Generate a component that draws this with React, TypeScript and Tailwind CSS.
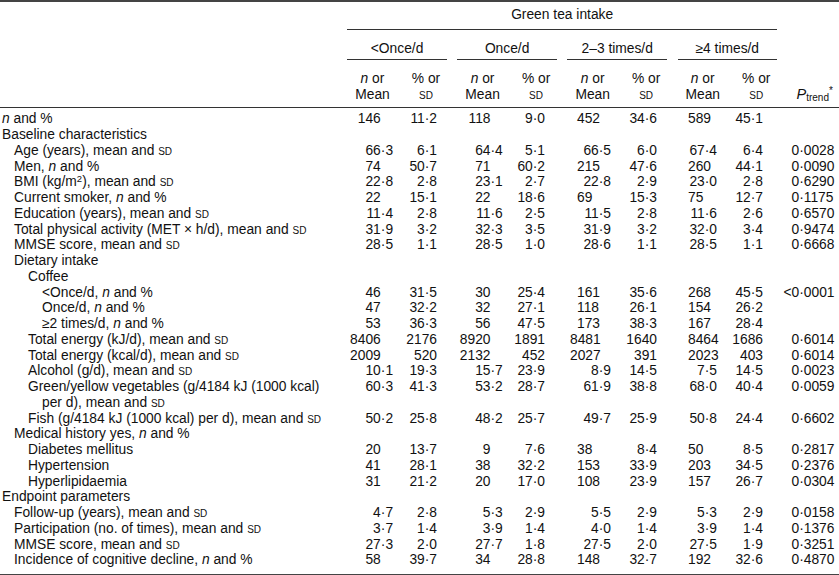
import React from "react";

type Row = { label: React.ReactNode; level: number; v?: string[]; p?: string };

const I = ({ children }: { children: React.ReactNode }) => <i>{children}</i>;
const SD = () => <span className="[font-variant-caps:small-caps]">sd</span>;

const rows: Row[] = [
  { label: <><I>n</I> and %</>, level: 0, v: ["146", "11·2", "118", "9·0", "452", "34·6", "589", "45·1"], p: "" },
  { label: "Baseline characteristics", level: 0 },
  { label: <>Age (years), mean and <SD /></>, level: 1, v: ["66·3", "6·1", "64·4", "5·1", "66·5", "6·0", "67·4", "6·4"], p: "0·0028" },
  { label: <>Men, <I>n</I> and %</>, level: 1, v: ["74", "50·7", "71", "60·2", "215", "47·6", "260", "44·1"], p: "0·0090" },
  { label: <>BMI (kg/m<sup className="text-[9.5px]">2</sup>), mean and <SD /></>, level: 1, v: ["22·8", "2·8", "23·1", "2·7", "22·8", "2·9", "23·0", "2·8"], p: "0·6290" },
  { label: <>Current smoker, <I>n</I> and %</>, level: 1, v: ["22", "15·1", "22", "18·6", "69", "15·3", "75", "12·7"], p: "0·1175" },
  { label: <>Education (years), mean and <SD /></>, level: 1, v: ["11·4", "2·8", "11·6", "2·5", "11·5", "2·8", "11·6", "2·6"], p: "0·6570" },
  { label: <>Total physical activity (MET × h/d), mean and <SD /></>, level: 1, v: ["31·9", "3·2", "32·3", "3·5", "31·9", "3·2", "32·0", "3·4"], p: "0·9474" },
  { label: <>MMSE score, mean and <SD /></>, level: 1, v: ["28·5", "1·1", "28·5", "1·0", "28·6", "1·1", "28·5", "1·1"], p: "0·6668" },
  { label: "Dietary intake", level: 1 },
  { label: "Coffee", level: 2 },
  { label: <>&lt;Once/d, <I>n</I> and %</>, level: 3, v: ["46", "31·5", "30", "25·4", "161", "35·6", "268", "45·5"], p: "<0·0001" },
  { label: <>Once/d, <I>n</I> and %</>, level: 3, v: ["47", "32·2", "32", "27·1", "118", "26·1", "154", "26·2"], p: "" },
  { label: <>≥2 times/d, <I>n</I> and %</>, level: 3, v: ["53", "36·3", "56", "47·5", "173", "38·3", "167", "28·4"], p: "" },
  { label: <>Total energy (kJ/d), mean and <SD /></>, level: 2, v: ["8406", "2176", "8920", "1891", "8481", "1640", "8464", "1686"], p: "0·6014" },
  { label: <>Total energy (kcal/d), mean and <SD /></>, level: 2, v: ["2009", "520", "2132", "452", "2027", "391", "2023", "403"], p: "0·6014" },
  { label: <>Alcohol (g/d), mean and <SD /></>, level: 2, v: ["10·1", "19·3", "15·7", "23·9", "8·9", "14·5", "7·5", "14·5"], p: "0·0023" },
  { label: "Green/yellow vegetables (g/4184 kJ (1000 kcal)", level: 2, v: ["60·3", "41·3", "53·2", "28·7", "61·9", "38·8", "68·0", "40·4"], p: "0·0059" },
  { label: <>per d), mean and <SD /></>, level: 3 },
  { label: <>Fish (g/4184 kJ (1000 kcal) per d), mean and <SD /></>, level: 2, v: ["50·2", "25·8", "48·2", "25·7", "49·7", "25·9", "50·8", "24·4"], p: "0·6602" },
  { label: <>Medical history yes, <I>n</I> and %</>, level: 1 },
  { label: "Diabetes mellitus", level: 2, v: ["20", "13·7", "9", "7·6", "38", "8·4", "50", "8·5"], p: "0·2817" },
  { label: "Hypertension", level: 2, v: ["41", "28·1", "38", "32·2", "153", "33·9", "203", "34·5"], p: "0·2376" },
  { label: "Hyperlipidaemia", level: 2, v: ["31", "21·2", "20", "17·0", "108", "23·9", "157", "26·7"], p: "0·0304" },
  { label: "Endpoint parameters", level: 0 },
  { label: <>Follow-up (years), mean and <SD /></>, level: 1, v: ["4·7", "2·8", "5·3", "2·9", "5·5", "2·9", "5·3", "2·9"], p: "0·0158" },
  { label: <>Participation (no. of times), mean and <SD /></>, level: 1, v: ["3·7", "1·4", "3·9", "1·4", "4·0", "1·4", "3·9", "1·4"], p: "0·1376" },
  { label: <>MMSE score, mean and <SD /></>, level: 1, v: ["27·3", "2·0", "27·7", "1·8", "27·5", "2·0", "27·5", "1·9"], p: "0·3251" },
  { label: <>Incidence of cognitive decline, <I>n</I> and %</>, level: 1, v: ["58", "39·7", "34", "28·8", "148", "32·7", "192", "32·6"], p: "0·4870" },
];

const split = (s: string) => {
  const i = s.indexOf("·");
  return i < 0 ? [s, ""] : [s.slice(0, i), s.slice(i)];
};

const Col1 = ({ s }: { s: string }) => {
  const [a, b] = split(s);
  return (
    <div className="flex w-[50px]">
      <span className="w-[30.8px] text-right">{a}</span>
      <span className="w-[19.2px] text-left">{b}</span>
    </div>
  );
};

const Col3 = ({ s }: { s: string }) => {
  const [a, b] = split(s);
  return (
    <div className="flex w-[65px]">
      <span className="w-[45.5px] text-right">{a}</span>
      <span className="w-[19.5px] text-left">{b}</span>
    </div>
  );
};

const Col5 = ({ s }: { s: string }) => {
  const dec = s.includes("·");
  if (dec) return <div className="w-[65px] text-right pr-[9px]">{s}</div>;
  if (s.length === 4) return <div className="w-[65px] text-left pl-[15px]">{s}</div>;
  return <div className="w-[65px] text-left pl-[22px]">{s}</div>;
};

const Col7 = ({ s }: { s: string }) => {
  const dec = s.includes("·");
  if (dec) return <div className="w-[65px] text-right pr-[13px]">{s}</div>;
  return <div className="w-[65px] text-left pl-[23px]">{s}</div>;
};

const indent = ["pl-[2px]", "pl-[14px]", "pl-[28px]", "pl-[42px]"];

function DataRow({ r }: { r: Row }) {
  return (
    <div className="flex">
      <div className={`w-[350px] whitespace-nowrap ${indent[r.level]}`}>{r.label}</div>
      {r.v && (
        <>
          <Col1 s={r.v[0]} />
          <div className="w-[45px] text-right pr-[8px]">{r.v[1]}</div>
          <Col3 s={r.v[2]} />
          <div className="w-[45px] text-right pr-[10px]">{r.v[3]}</div>
          <Col5 s={r.v[4]} />
          <div className="w-[45px] text-right pr-[8px]">{r.v[5]}</div>
          <Col7 s={r.v[6]} />
          <div className="w-[45px] text-right pr-[12px]">{r.v[7]}</div>
          <div className="w-[64px] pl-[16.5px] whitespace-nowrap">
            {r.p && r.p.startsWith("<") ? (
              <>
                <span className="ml-[-8px]">&lt;</span>
                {r.p.slice(1)}
              </>
            ) : (
              r.p
            )}
          </div>
        </>
      )}
    </div>
  );
}

function Group({ title }: { title: React.ReactNode }) {
  return (
    <div className="w-[99.5px] flex flex-col">
      <div className="text-center pt-[10.4px] pb-[3px] border-b border-[#333]">{title}</div>
      <div className="flex pt-[10.4px]">
        <div className="w-[50.4px] text-center">
          <I>n</I> or
          <br />
          Mean
        </div>
        <div className="w-[41.6px] ml-[7.5px] text-center">
          % or
          <br />
          <SD />
        </div>
      </div>
    </div>
  );
}

export default function App() {
  return (
    <div className="w-[839px] h-[575px] bg-white text-[#111] text-[13.8px] leading-[15.75px] font-['Liberation_Sans',Arial,sans-serif] overflow-hidden">
      <div className="border-t-2 border-[#444]">
        <div className="flex border-b border-[#333] pb-[4.8px]">
          <div className="w-[347.3px]" />
          <div className="w-[429.7px] flex flex-col">
            <div className="text-center pt-[5.1px] pb-[6.4px] border-b border-[#333]">Green tea intake</div>
            <div className="flex gap-[10.6px]">
              <Group title="<Once/d" />
              <Group title="Once/d" />
              <Group title="2–3 times/d" />
              <Group title="≥4 times/d" />
            </div>
          </div>
          <div className="flex-1 flex items-end pl-[19.5px]">
            <span className="whitespace-nowrap">
              <i className="text-[14.5px]">P</i>
              <sub className="text-[10px]">trend</sub>
              <sup className="text-[10px]">*</sup>
            </span>
          </div>
        </div>
        <div className="pt-[3.3px] pb-[6px] border-b-2 border-[#444]">
          {rows.map((r, i) => (
            <DataRow key={i} r={r} />
          ))}
        </div>
      </div>
    </div>
  );
}
